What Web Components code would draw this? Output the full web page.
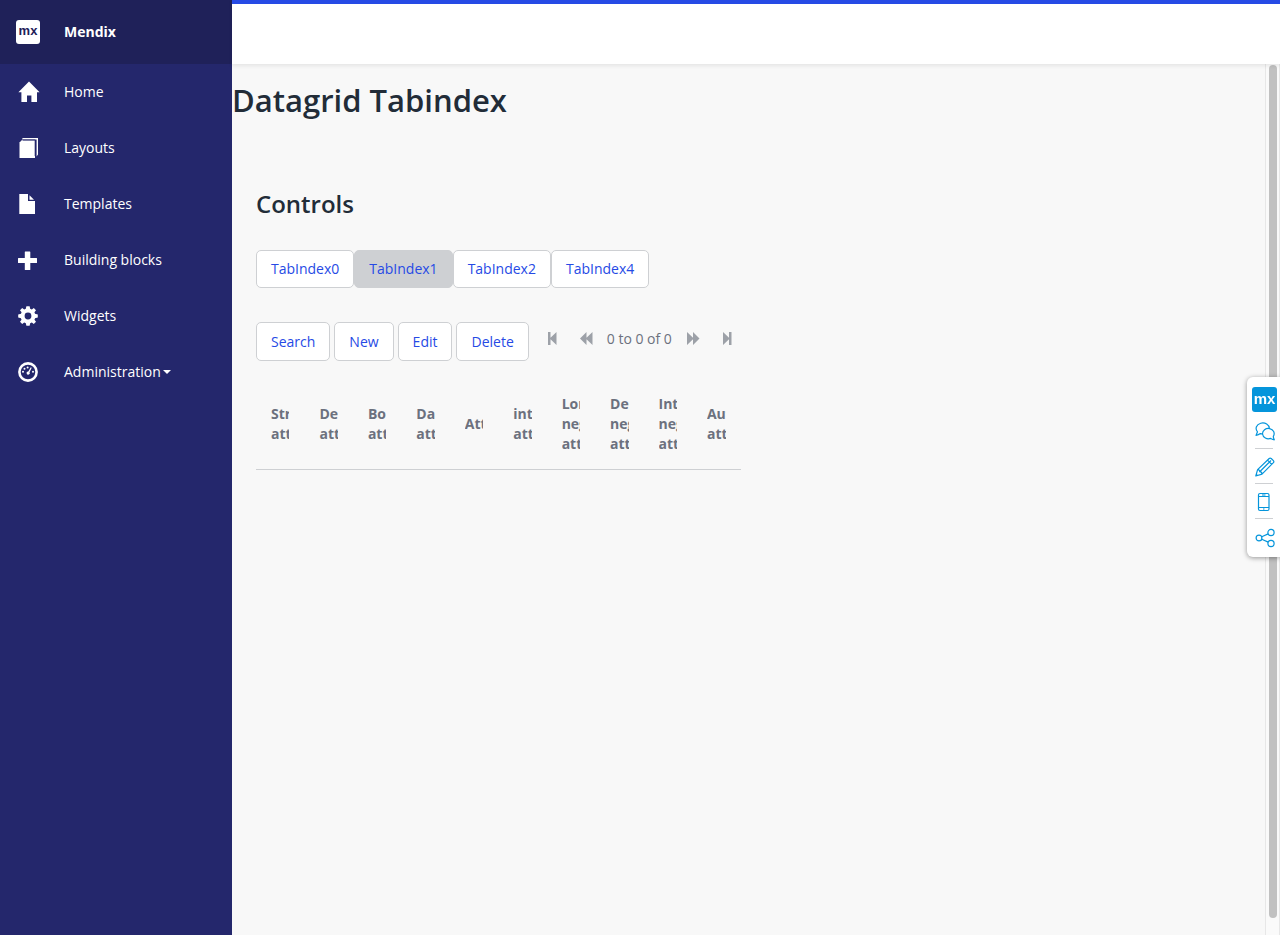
<!DOCTYPE html>
<html lang="en">
<head>
<meta charset="utf-8">
<title>Datagrid Tabindex</title>
<style>
  :root {
    --brand: #264ae5;
    --side: #24276c;
    --side-top: #1f2159;
    --bg: #f8f8f8;
    --line: #ced0d3;
    --text: #6c717e;
    --head: #222c38;
  }
  body { margin: 0; font: 14px/20px "Open Sans", sans-serif; color: var(--text); background: var(--bg); }
</style>
</head>
<body>
<mx-shell>
  <mx-sidebar slot="side"></mx-sidebar>
  <mx-page></mx-page>
</mx-shell>
<mx-feedback></mx-feedback>

<script>
const define = (name, html, setup) => customElements.define(name, class extends HTMLElement {
  constructor() {
    super();
    this.attachShadow({ mode: "open" });
  }
  connectedCallback() {
    this.shadowRoot.innerHTML = html;
    if (setup) setup.call(this, this.shadowRoot);
  }
});

const ICONS = {
  home: '<path d="M11 .5 21.6 11.2H19V21H13.4V14.6H9V21H3.4V11.2H.4Z"/>',
  book: '<path d="M1.5 5.5 4 3H17V21H1.5Z"/><path d="M3.8 2 5 1H20V17.5L18.6 19.6V2.600H4.4Z"/><path d="M4.5 3.1H17.2V19" fill="none" stroke="#24276c"/>',
  file: '<path d="M1.3 1H10V8H17V21H1.3Z"/><path d="M11.5 2.2 16 6.8H11.5Z"/>',
  plus: '<path d="M7.2 2.500H11.800Q12.300 2.500 12.300 3V9H18.500Q19 9 19 9.500V13.500Q19 14 18.500 14H12.300V20.500Q12.300 21 11.800 21H7.200Q6.800 21 6.800 20.500V14H.5Q0 14 0 13.500V9.500Q0 9 .5 9H6.800V3Q6.800 2.500 7.200 2.500Z"/>',
  cog: '<circle cx="10" cy="11" r="5.4" fill="none" stroke="currentColor" stroke-width="4"/><path d="M8.400 1.200H11.600L12.500 5H7.500ZM8.400 20.800H11.600L12.500 17H7.500ZM.2 9.400V12.600L4 13.500V8.500ZM19.800 9.400V12.600L16 13.500V8.500ZM2 5.200 4.200 3 7.500 5.500 4.500 8.500ZM18 5.200 15.800 3 12.500 5.500 15.500 8.500ZM2 16.800 4.200 19 7.500 16.500 4.500 13.500ZM18 16.800 15.800 19 12.500 16.500 15.500 13.500Z"/>',
  dash: '<circle cx="10" cy="11" r="8.600" fill="none" stroke="currentColor" stroke-width="2.600"/><circle cx="5" cy="10.700" r="1"/><circle cx="6.500" cy="7.700" r="1"/><circle cx="9.600" cy="6.400" r="1"/><circle cx="15" cy="10.700" r="1"/><path d="M12.800 6.300 13.700 6.700 11.500 11.200A1.600 1.600 0 1 1 10.300 10.500Z"/>',
  first: '<path d="M0 0H2.500V5.700L8.500 0V13L2.500 7.300V13H0Z"/>',
  prev: '<path d="M0 6.500 6.500 0V5.700L12.500 0V13L6.500 7.300V13Z"/>',
  next: '<path d="M12.500 6.500 6 0V5.700L0 0V13L6 7.300V13Z"/>',
  last: '<path d="M8.500 0H6V5.700L0 0V13L6 7.300V13H8.500Z"/>',
  chat: '<path d="M1 14.500 2.500 10.800A6.600 5.500 0 1 1 5.400 12.600Q3.500 14 1 14.500Z"/><path fill="#fff" d="M19.300 18.800Q17 18.600 15.600 17.400A5.800 5.200 0 1 1 18.300 15.300Q18.300 17 19.300 18.800Z"/>',
  pencil: '<path d="M.8 19 2.600 12.600 14.200 1.500Q15.200.6 16.200 1.500L18.400 3.700Q19.300 4.700 18.400 5.700L7 17.200ZM2.600 12.600Q4.800 12.500 4.700 14.700Q7 14.700 7 17.200M4.700 14.700 16 3.500M12.500 3.200 16.700 7.400M1.200 17.300 2.400 18.500"/>',
  phone: '<rect x="3.500" y="1.500" width="10.500" height="17" rx="1.500"/><path d="M3.500 4.500H14M3.500 15.500H14M7 3H10.500M8 17H9.500"/>',
  share: '<circle cx="4" cy="10" r="2.900"/><circle cx="16" cy="4.500" r="3.100"/><circle cx="16" cy="15.500" r="3.100"/><path d="M6.700 8.700 13.200 5.900M6.700 11.300 13.200 14.100"/>'
};
const icon = (n, w, h, extra = 'fill="currentColor"') =>
  `<svg width="${w}" height="${h}" viewBox="0 0 ${w} ${h}" ${extra} aria-hidden="true">${ICONS[n]}</svg>`;

define("mx-shell", `
  <style>
    :host { display: grid; grid-template-columns: 232px 1fr; min-height: 100vh; }
    main { display: grid; grid-template-rows: 64px 1fr; min-width: 0; }
    header { box-sizing: border-box; background: #fff; border-top: 4px solid var(--brand);
      box-shadow: 0 2px 4px rgba(0,0,0,.08); z-index: 1; }
    .body { display: grid; grid-template-columns: 1fr 15px; }
    .track { box-sizing: border-box; background: #fafafa; border: solid #e7e7e7; border-width: 0 1px;
      padding: 1px 2px 17px 3px; display: grid; }
    .thumb { background: #c1c1c1; border-radius: 4px; }
  </style>
  <slot name="side"></slot>
  <main><header></header><div class="body"><slot></slot><div class="track"><div class="thumb"></div></div></div></main>`);

define("mx-logo", `
  <style>
    :host { display: flex; align-items: center; justify-content: center; width: 24px; height: 24px;
      border-radius: 3px; background: #fff; color: var(--side-top);
      font: bold 13px/20px "Liberation Sans", sans-serif; }
    span { padding-bottom: 2px; }
  </style><span>mx</span>`);

define("mx-nav-item", `
  <style>
    :host { display: block; }
    a { display: flex; align-items: center; height: 56px; padding-left: 18px; color: #fff; text-decoration: none; }
    svg { width: 22px; height: 22px; margin-right: 24px; }
    .caret { display: none; margin-left: 2px; border: 4px solid transparent; border-top-color: #fff; border-bottom: 0; }
    :host([menu]) .caret { display: block; }
  </style>
  <a href="#"><slot></slot><span class="caret"></span></a>`,
  function (root) {
    root.querySelector("a").insertAdjacentHTML("afterbegin", icon(this.getAttribute("icon"), 22, 22));
  });

define("mx-sidebar", `
  <style>
    :host { display: block; background: var(--side); color: #fff; }
    .brand { display: flex; align-items: center; gap: 24px; height: 64px; padding-left: 16px;
      background: var(--side-top); font-weight: 700; }
  </style>
  <div class="brand"><mx-logo></mx-logo><span>Mendix</span></div>
  <nav>
    <mx-nav-item icon="home">Home</mx-nav-item>
    <mx-nav-item icon="book">Layouts</mx-nav-item>
    <mx-nav-item icon="file">Templates</mx-nav-item>
    <mx-nav-item icon="plus">Building blocks</mx-nav-item>
    <mx-nav-item icon="cog">Widgets</mx-nav-item>
    <mx-nav-item icon="dash" menu>Administration</mx-nav-item>
  </nav>`);

define("mx-button", `
  <style>
    :host { display: block; }
    button { font: inherit; display: block; height: 38px; padding: 0 14px; color: var(--brand); background: #fff;
      border: 1px solid var(--line); border-radius: 5px; white-space: nowrap; }
    :host([active]) button { background: var(--line); }
    :host([tall]) button { height: 39px; }
  </style>
  <button type="button"><slot></slot></button>`);

define("mx-pager", `
  <style>
    :host { display: flex; align-items: center; height: 33px; color: var(--text); }
    button { display: flex; padding: 0; border: 0; background: none; color: #9da1a8; }
    .a { margin-right: 23px; } .b { margin-right: 14px; } .c { margin: 0 23px 0 15px; }
  </style>
  <button class="a" aria-label="First page">${icon("first", 9, 13)}</button>
  <button class="b" aria-label="Previous page">${icon("prev", 13, 13)}</button>
  <span>0 to 0 of 0</span>
  <button class="c" aria-label="Next page">${icon("next", 13, 13)}</button>
  <button aria-label="Last page">${icon("last", 9, 13)}</button>`);

define("mx-datagrid", `
  <style>
    :host { display: block; }
    table { width: 100%; table-layout: fixed; border-collapse: collapse; }
    th { padding: 15px; text-align: left; font-weight: 700; border-bottom: 1px solid var(--line); }
    th div { overflow: hidden; }
  </style>
  <table><thead><tr></tr></thead></table>`,
  function (root) {
    const columns = ["String attribute", "Decimal attribute", "Boolean attribute", "Date attribute", "Attribute",
      "integer attribute", "Long negative attribute", "Decimal negative attribute",
      "Integer negative attribute", "Autonumber attribute"];
    root.querySelector("tr").innerHTML = columns.map(c => `<th scope="col"><div>${c}</div></th>`).join("");
  });

define("mx-page", `
  <style>
    :host { display: block; min-width: 0; }
    h1, h2 { margin: 0; color: var(--head); font-weight: 600; }
    h1 { font-size: 31px; line-height: 40px; padding-top: 16px; }
    section { padding: 68px 24px 24px; }
    h2 { font-size: 24px; line-height: 32px; margin-bottom: 30px; }
    .tabs { display: flex; margin-bottom: 34px; }
    .half { width: 50%; box-sizing: border-box; padding-right: 8px; }
    .tools { display: flex; gap: 4px; margin-bottom: 18px; }
    mx-pager { margin-left: 15px; }
  </style>
  <h1>Datagrid Tabindex</h1>
  <section>
    <h2>Controls</h2>
    <div class="tabs">
      <mx-button>TabIndex0</mx-button><mx-button active>TabIndex1</mx-button><mx-button>TabIndex2</mx-button><mx-button>TabIndex4</mx-button>
    </div>
    <div class="half">
      <div class="tools">
        <mx-button tall>Search</mx-button><mx-button tall>New</mx-button><mx-button tall>Edit</mx-button><mx-button tall>Delete</mx-button>
        <mx-pager></mx-pager>
      </div>
      <mx-datagrid></mx-datagrid>
    </div>
  </section>`);

const line = 'fill="none" stroke="currentColor" stroke-width="1.2" stroke-linejoin="round"';
define("mx-feedback", `
  <style>
    :host { position: fixed; right: 0; top: 377px; z-index: 2; box-sizing: border-box; width: 33px; height: 180px;
      padding: 10px 0 0 5px; background: #fff; border-radius: 6px 0 0 6px; box-shadow: 0 1px 5px rgba(0,0,0,.4); color: #0595db; }
    mx-logo { width: 25px; height: 25px; background: #0595db; color: #fff; font-size: 15px; }
    button { display: flex; align-items: center; justify-content: center; box-sizing: border-box; width: 18px; height: 35px;
      margin-left: 3px; padding: 2px 0 0 2px; border: 0; border-bottom: 1px solid #ced0d3; background: none; color: inherit; }
    button:last-child { border: 0; }
    svg { flex: none; }
    button:first-of-type { height: 37px; }
  </style>
  <mx-logo></mx-logo>
  <button aria-label="Feedback">${icon("chat", 20, 20, line)}</button>
  <button aria-label="Edit">${icon("pencil", 20, 20, line)}</button>
  <button aria-label="View on phone">${icon("phone", 20, 20, line)}</button>
  <button aria-label="Share">${icon("share", 20, 20, line)}</button>`);
</script>
</body>
</html>
